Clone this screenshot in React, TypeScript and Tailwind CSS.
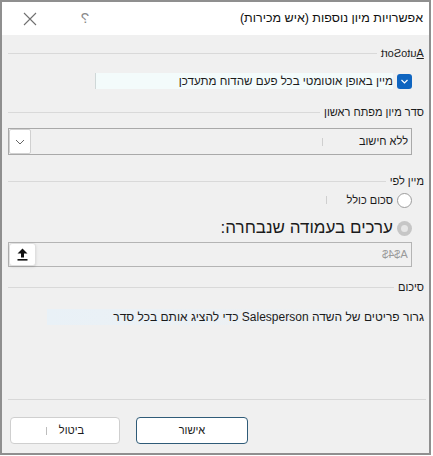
export default function App() {
  return (
    <div className="w-[433px] h-[456px] bg-white font-['Liberation_Sans',sans-serif]">
      <div
        dir="rtl"
        className="w-[431px] h-[455px] border-2 border-[#8f8f8f] bg-[#f0f0f0] flex flex-col text-[11px] text-[#1b1b1b]"
      >
        {/* title bar */}
        <div className="h-[33px] bg-white flex items-center pr-[6px] pl-[20px]">
          <span className="flex-1 text-[12.5px] text-[#111]">אפשרויות מיון נוספות (איש מכירות)</span>
          <span className="ml-[42px] w-[10px] text-center text-[15px] text-[#8a8a8a] -scale-x-100">?</span>
          <svg width="16" height="16" viewBox="0 0 16 16" className="text-[#707070]">
            <path d="M2 2 L14 14 M14 2 L2 14" stroke="currentColor" strokeWidth="1.1" fill="none" />
          </svg>
        </div>

        <div className="flex-1 flex flex-col pl-[6px] pr-[3px]">
          <Header className="mt-[10px]">
            <span className="inline-block -scale-x-100">
              <span className="underline">A</span>utoSort
            </span>
          </Header>

          <div className="mt-[12px] mr-[14px] h-[16px] flex items-center gap-[4px]">
            <span className="w-[15px] h-[15px] rounded-[3px] bg-[#0f65c0] flex items-center justify-center">
              <svg width="9" height="9" viewBox="0 0 9 9">
                <path d="M1.5 3 L4.5 6 L7.5 3" stroke="white" strokeWidth="1.2" fill="none" />
              </svg>
            </span>
            <span className="w-[298px] h-[16px] leading-[16px] text-[11.6px] bg-[#f3fbfb] border-l border-[#cfd8d8]">
              מיין באופן אוטומטי בכל פעם שהדוח מתעדכן
            </span>
          </div>

          <Header className="mt-[15px]">סדר מיון מפתח ראשון</Header>

          <div className="mt-[8px] mr-[14px] h-[27px] border border-[#a9a9a9] flex items-center">
            <span className="flex-1 pr-[3px] flex items-center">
              <span>ללא חישוב</span>
              <span className="mr-[36px] w-px h-[8px] bg-[#cfcfcf]" />
            </span>
            <span className="w-[22px] h-[25px] bg-white border border-[#d0d0d0] rounded-[2px] flex items-center justify-center">
              <svg width="10" height="6" viewBox="0 0 10 6">
                <path d="M1 1 L5 5 L9 1" stroke="#555" strokeWidth="0.9" fill="none" />
              </svg>
            </span>
          </div>

          <Header className="mt-[18px]">מיין לפי</Header>

          <div className="mt-[3px] mr-[14px] h-[16px] flex items-center gap-[4px]">
            <span className="w-[15px] h-[15px] rounded-full bg-white border border-[#9c9c9c]" />
            <span>סכום כולל</span>
            <span className="mr-[16px] w-px h-[8px] bg-[#cfcfcf]" />
          </div>

          <div className="mt-[9px] mr-[14px] h-[22px] flex items-center gap-[4px]">
            <span className="w-[15px] h-[15px] rounded-full bg-[#c6c6c6] flex items-center justify-center">
              <span className="w-[7px] h-[7px] rounded-full bg-[#e6e6e6]" />
            </span>
            <span className="text-[17px] leading-[22px]">ערכים בעמודה שנבחרה:</span>
          </div>

          <div className="mt-[3px] mr-[14px] h-[25px] border border-[#b4b4b4] flex items-center">
            <span className="flex-1 pr-[3px]">
              <span className="inline-block -scale-x-100 text-[#9a9a9a]">$A$4</span>
            </span>
            <span className="w-[27px] h-[23px] bg-white rounded-[3px] border border-[#e0e0e0] shadow-sm flex items-center justify-center">
              <svg width="11" height="13" viewBox="0 0 11 13">
                <path d="M5.5 0.5 L10.5 5.5 L7 5.5 L7 9.5 L4 9.5 L4 5.5 L0.5 5.5 Z" fill="#111" />
                <rect x="0.5" y="11" width="10" height="1.6" fill="#111" />
              </svg>
            </span>
          </div>

          <Header className="mt-[12px]">סיכום</Header>

          <div className="mt-[14px] h-[16px] flex items-center pr-[2px]">
            <span className="w-[377px] h-[16px] leading-[16px] text-[12px] bg-gradient-to-l from-[#f0f0f0] to-[#e9f1f7]">
              גרור פריטים של השדה Salesperson כדי להציג אותם בכל סדר
            </span>
          </div>

          <div className="flex-1" />

          <div className="h-px bg-[#d8d8d8]" />
          <div className="mt-[17px] mb-[9px] pl-[2px] flex justify-end gap-[16px]">
            <button className="w-[112px] h-[27px] bg-white border border-[#2f5b78] rounded-[4px] text-[11px]">
              אישור
            </button>
            <button className="w-[110px] h-[27px] bg-white border border-[#cfcfcf] rounded-[4px] text-[11px] flex items-center justify-center gap-[12px]">
              <span>ביטול</span>
              <span className="w-px h-[8px] bg-[#bdbdbd]" />
            </button>
          </div>
        </div>
      </div>
    </div>
  );
}

function Header({ children, className = '' }: { children: React.ReactNode; className?: string }) {
  return (
    <div className={`h-[16px] flex items-center gap-[4px] pr-[2px] ${className}`}>
      <span className="whitespace-nowrap">{children}</span>
      <div className="flex-1 h-px bg-[#d9d9d9]" />
    </div>
  );
}
